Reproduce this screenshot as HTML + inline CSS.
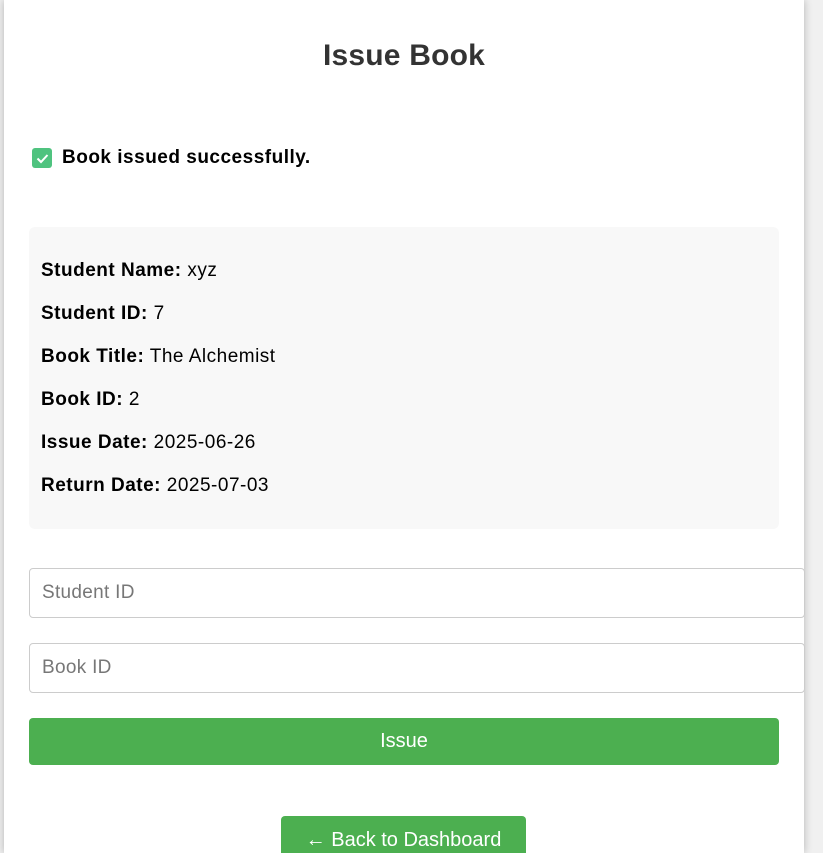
<!DOCTYPE html>
<html><head><meta charset="utf-8"><style>
html,body{margin:0;padding:0;height:853px;overflow:hidden}
body{background:#f0f0f0;font-family:"Liberation Sans",Arial,sans-serif;width:823px;position:relative}
.card{position:absolute;left:4px;top:0;width:750px;height:853px;background:#fff;padding:0 25px;box-shadow:0 0 8px rgba(0,0,0,0.25)}
h2{margin:0;position:absolute;top:38px;left:0;width:800px;text-align:center;font-size:30px;color:#333;line-height:36px;letter-spacing:0.2px}
.msg{position:absolute;top:147px;left:28px;font-size:19px;letter-spacing:0.5px;font-weight:bold;color:#000;line-height:22px;display:flex;align-items:center}
.chk{width:20px;height:20px;background:#4fc37f;border-radius:3px;margin-right:10px;display:inline-flex;align-items:center;justify-content:center}
.info{position:absolute;top:227px;left:25px;width:726px;padding:22px 12px;background:#f8f8f8;border-radius:6px}
.info p{margin:0;line-height:43px;font-size:19px;letter-spacing:0.5px;color:#000}
input{position:absolute;left:25px;width:750px;padding:12px;height:24px;border:1px solid #ccc;border-radius:4px;font-size:19px;letter-spacing:0.3px;font-family:inherit;outline:none}
input::placeholder{color:#777}
.btn{position:absolute;left:25px;top:718px;width:750px;height:47px;background:#4caf50;border-radius:4px;color:#fff;font-size:20px;text-align:center;line-height:47px}
.back{position:absolute;left:277px;top:816px;width:245px;height:50px;background:#4caf50;border-radius:4px;color:#fff;font-size:20px;text-align:center;line-height:48px}
</style></head><body>
<div class="card">
<h2>Issue Book</h2>
<div class="msg"><span class="chk"><svg width="13" height="11" viewBox="0 0 13 11"><path d="M1.5 5.5 L5 9 L11.5 2" fill="none" stroke="#fff" stroke-width="2"/></svg></span>Book issued successfully.</div>
<div class="info">
<p><b>Student Name:</b> xyz</p>
<p><b>Student ID:</b> 7</p>
<p><b>Book Title:</b> The Alchemist</p>
<p><b>Book ID:</b> 2</p>
<p><b>Issue Date:</b> 2025-06-26</p>
<p><b>Return Date:</b> 2025-07-03</p>
</div>
<input style="top:568px" placeholder="Student ID">
<input style="top:643px" placeholder="Book ID">
<div class="btn">Issue</div>
<div class="back">← Back to Dashboard</div>
</div>
</body></html>
